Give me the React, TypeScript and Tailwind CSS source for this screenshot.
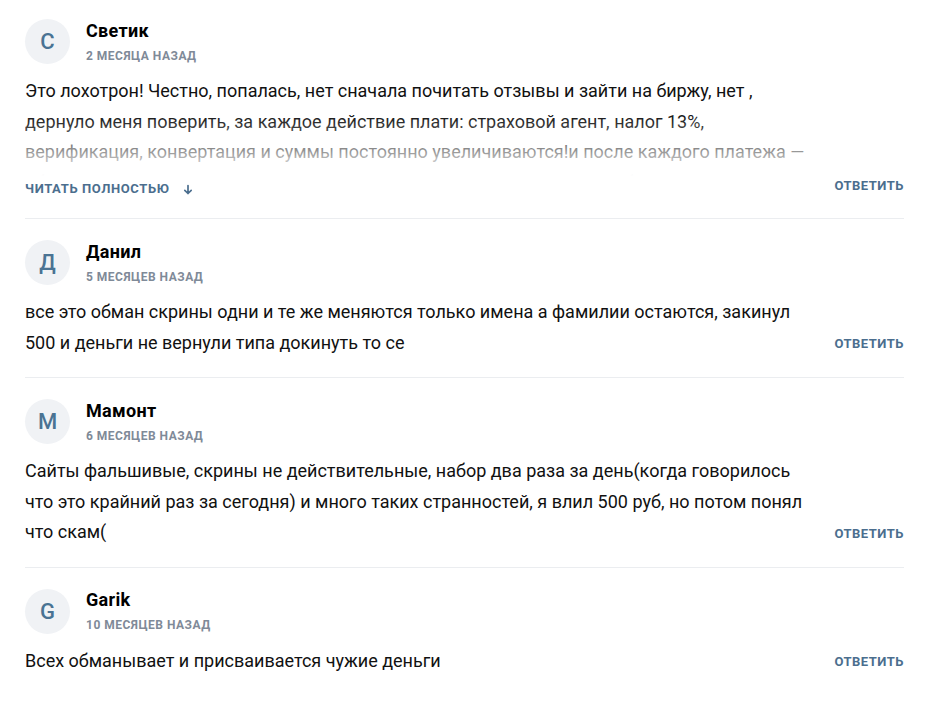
import type { ReactNode } from "react";

type Comment = {
  initial: string;
  name: string;
  date: string;
  text: string;
  collapsed?: boolean;
};

const comments: Comment[] = [
  {
    initial: "С",
    name: "Светик",
    date: "2 месяца назад",
    text: "Это лохотрон! Честно, попалась, нет сначала почитать отзывы и зайти на биржу, нет , дернуло меня поверить, за каждое действие плати: страховой агент, налог 13%, верификация, конвертация и суммы постоянно увеличиваются!и после каждого платежа — обещают вывод, но вывода так и нет, только новые и новые платежи, будьте осторожны!",
    collapsed: true,
  },
  {
    initial: "Д",
    name: "Данил",
    date: "5 месяцев назад",
    text: "все это обман скрины одни и те же меняются только имена а фамилии остаются, закинул 500 и деньги не вернули типа докинуть то се",
  },
  {
    initial: "М",
    name: "Мамонт",
    date: "6 месяцев назад",
    text: "Сайты фальшивые, скрины не действительные, набор два раза за день(когда говорилось что это крайний раз за сегодня) и много таких странностей, я влил 500 руб, но потом понял что скам(",
  },
  {
    initial: "G",
    name: "Garik",
    date: "10 месяцев назад",
    text: "Всех обманывает и присваивается чужие деньги",
  },
];

function Avatar({ children }: { children: ReactNode }) {
  return (
    <div className="flex h-[45px] w-[45px] shrink-0 items-center justify-center rounded-full bg-[#f0f2f5] text-[22px] font-medium text-[#4a7393]">
      {children}
    </div>
  );
}

function ReplyButton() {
  return (
    <button className="shrink-0 text-[13px] font-bold uppercase leading-4 tracking-[0.5px] text-[#4b6e8e]">
      Ответить
    </button>
  );
}

function CommentItem({ c, first }: { c: Comment; first: boolean }) {
  return (
    <div
      className={
        first ? "pt-[19px] pb-[21px]" : "border-t border-[#ebedf0] pt-[21px] pb-[19px]"
      }
    >
      <div className="flex items-center gap-4">
        <Avatar>{c.initial}</Avatar>
        <div className="flex flex-col">
          <span className="text-[18px] font-bold leading-[22px] tracking-[0.3px] text-black">
            {c.name}
          </span>
          <span className="mt-[6px] text-[12px] font-bold uppercase leading-4 tracking-[0.5px] text-[#7f8a98]">
            {c.date}
          </span>
        </div>
      </div>
      <div className="mt-[12px] flex items-end gap-4">
        <div className="min-w-0 flex-1">
          {c.collapsed ? (
            <>
              <div className="relative max-h-[100px] overflow-hidden">
                <p className="text-[18px] leading-[30.5px] text-[#111]">{c.text}</p>
                <div className="absolute inset-x-0 bottom-0 h-[62px] bg-gradient-to-b from-white/0 via-white/45 to-white" />
              </div>
              <button className="mt-[5px] flex items-center gap-[13px] text-[13px] font-bold uppercase leading-4 tracking-[0.6px] text-[#4b6e8e]">
                <span>Читать полностью</span>
                <svg width="10" height="11" viewBox="0 0 10 11" fill="none" stroke="currentColor" strokeWidth="1.7" strokeLinecap="round" strokeLinejoin="round">
                  <path d="M5 1.5v8M1.8 6.4 5 9.5l3.2-3.1" />
                </svg>
              </button>
            </>
          ) : (
            <p className="text-[18px] leading-[30.5px] text-[#111]">{c.text}</p>
          )}
        </div>
        <div className={c.collapsed ? "pb-0" : "pb-[3px]"}>
          <ReplyButton />
        </div>
      </div>
    </div>
  );
}

export default function App() {
  return (
    <div className="min-h-screen bg-white font-['Roboto',sans-serif]">
      <div className="ml-[25px] w-[879px]">
        {comments.map((c, i) => (
          <CommentItem key={c.name} c={c} first={i === 0} />
        ))}
      </div>
    </div>
  );
}
